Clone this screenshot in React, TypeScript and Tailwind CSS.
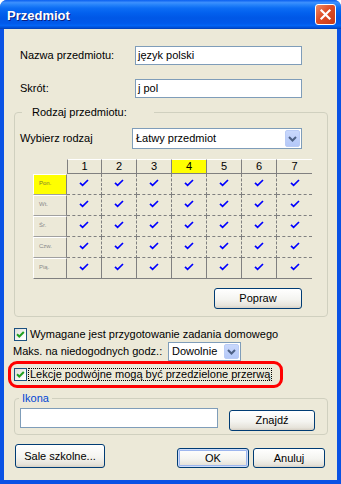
import clsx from "clsx";

const days = ["Pon.", "Wt.", "Śr.", "Czw.", "Pią."];
const hours = [1, 2, 3, 4, 5, 6, 7];

function CheckBox() {
  return (
    <div className="w-[13px] h-[13px] shrink-0 border border-[#1C5180] bg-[linear-gradient(135deg,#DCDCD7,#FFFFFF_80%)] flex items-center justify-center">
      <svg width="11" height="11" viewBox="0 0 11 11">
        <path d="M2 5.2 L4.3 7.5 L8.8 3" stroke="#21A121" strokeWidth="2" fill="none" />
      </svg>
    </div>
  );
}

function Select({ value, className }: { value: string; className: string }) {
  return (
    <div className={clsx("flex items-stretch border border-[#7F9DB9] bg-white p-[1px]", className)}>
      <span className="flex-1 flex items-center pl-[2px] whitespace-nowrap">{value}</span>
      <div className="w-[15px] rounded-[2px] border border-[#BACCF6] bg-[linear-gradient(to_bottom,#C9D8FC,#B4C8F8)] flex items-center justify-center">
        <svg width="9" height="6" viewBox="0 0 9 6">
          <path d="M1 1 L4.5 4.5 L8 1" stroke="#4D6185" strokeWidth="2" fill="none" />
        </svg>
      </div>
    </div>
  );
}

function Btn({ children, className }: { children: React.ReactNode; className: string }) {
  return (
    <div
      className={clsx(
        "flex items-center justify-center border border-[#003C74] rounded-[3px] bg-[linear-gradient(to_bottom,#FFFFFF,#F4F4F0_55%,#E6E3DA_88%,#D6D0C5)]",
        className
      )}
    >
      {children}
    </div>
  );
}

function TextBox({ value, className }: { value?: string; className: string }) {
  return (
    <div className={clsx("flex items-center border border-[#7F9DB9] bg-white pl-[2px]", className)}>
      {value}
    </div>
  );
}

function Check() {
  return (
    <svg width="10" height="8" viewBox="0 0 10 8">
      <path d="M1 3.8 L3.6 6.4 L9 1" stroke="#0000FF" strokeWidth="1.7" fill="none" />
    </svg>
  );
}

export default function App() {
  return (
    <div className="w-[341px] h-[484px] flex flex-col bg-[#0A52E4] rounded-t-[7px] overflow-hidden font-['Liberation_Sans',Arial,sans-serif] text-[11px] text-black">
      {/* title bar */}
      <div className="h-[29px] shrink-0 flex items-center pl-[7px] pt-[2px] bg-[linear-gradient(to_bottom,#0A5FF0_0%,#3D90FD_9%,#2784FA_16%,#0C6DF4_28%,#0260EE_45%,#0057E6_62%,#0059EB_80%,#0264F5_88%,#0050D8_95%,#003FB4_100%)]">
        <span className="text-white font-bold text-[13px] [text-shadow:1px_1px_0_#0A1E80]">Przedmiot</span>
        <div className="ml-auto mr-[5px] mb-[2px] w-[21px] h-[21px] rounded-[3px] border border-white bg-[linear-gradient(135deg,#EE8C68,#DE4D26_45%,#C73A18)] flex items-center justify-center">
          <svg width="13" height="13" viewBox="0 0 13 13">
            <path d="M2.5 2.5 L10.5 10.5 M10.5 2.5 L2.5 10.5" stroke="white" strokeWidth="2.2" strokeLinecap="square" />
          </svg>
        </div>
      </div>

      <div className="flex-1 mx-[4px] mb-[4px] bg-[#ECE9D8] flex flex-col">
        <div className="mt-[17px] flex items-center h-[19px]">
          <span className="w-[131px] pl-[16px]">Nazwa przedmiotu:</span>
          <TextBox value="język polski" className="w-[167px] h-[19px]" />
        </div>
        <div className="mt-[14px] flex items-center h-[19px]">
          <span className="w-[131px] pl-[16px]">Skrót:</span>
          <TextBox value="j pol" className="w-[167px] h-[19px]" />
        </div>

        <fieldset className="mt-[7px] ml-[10px] w-[314px] border border-[#D0D0BF] rounded-[4px]">
          <legend className="ml-[7px] w-[132px] pl-[10px] leading-[14px]">Rodzaj przedmiotu:</legend>
          <div className="mt-[9px] flex items-center h-[21px]">
            <span className="ml-[5px] w-[112px]">Wybierz rodzaj</span>
            <Select value="Łatwy przedmiot" className="w-[170px] h-[21px]" />
          </div>

          <div className="mt-[10px] ml-[18px] grid grid-cols-[34px_repeat(7,35px)] grid-rows-[15px_repeat(5,21px)]">
            <div />
            {hours.map((h, i) => (
              <div
                key={h}
                className={clsx(
                  "flex items-center justify-center border-t border-t-white border-b border-b-[#808080]",
                  i === 0 && "border-l border-l-[#808080]",
                  i < 6 && "border-r border-r-[#808080]",
                  h === 4 && "bg-[#FFFF00]"
                )}
              >
                {h}
              </div>
            ))}
            {days.map((d, r) => (
              <>
                <div
                  key={d}
                  className={clsx(
                    "border-t border-t-white border-l border-l-white border-b border-r border-r-[#808080] pl-[5px] pt-[4px] text-[6px] leading-[8px]",
                    r === 4 ? "border-b-[#808080]" : "border-b-[#A0A0A0]",
                    r === 0 ? "bg-[#FFFF00] text-[#7A7A30]" : "text-[#8A8A8A]"
                  )}
                >
                  {d}
                </div>
                {hours.map((h, i) => (
                  <div
                    key={d + h}
                    className={clsx(
                      "flex items-center justify-center pb-[3px] border-b border-b-[#808080]",
                      r === 4 ? "border-solid" : "border-dashed",
                      i < 6 && "border-r border-r-[#808080]"
                    )}
                  >
                    <Check />
                  </div>
                ))}
              </>
            ))}
          </div>

          <div className="mt-[9px] pb-[7px] pr-[25px] flex justify-end">
            <Btn className="w-[88px] h-[21px]">Popraw</Btn>
          </div>
        </fieldset>

        <div className="mt-[10px] ml-[10px] h-[14px] flex items-center gap-[3px]">
          <CheckBox />
          <span>Wymagane jest przygotowanie zadania domowego</span>
        </div>

        <div className="mt-[1px] ml-[9px] flex items-center h-[19px]">
          <span className="w-[155px]">Maks. na niedogodnych godz.:</span>
          <Select value="Dowolnie" className="w-[73px] h-[19px]" />
        </div>

        <div className="ml-[4px] w-[275px] h-[27px] border-[3px] border-[#FF0000] rounded-[9px] flex items-center pl-[3px] gap-[1px]">
          <CheckBox />
          <span className="border border-dotted border-black px-[1px] leading-[11px] whitespace-nowrap">
            Lekcje podwójne mogą być przedzielone przerwą
          </span>
        </div>

        <fieldset className="mt-[3px] ml-[10px] w-[314px] border border-[#D0D0BF] rounded-[4px]">
          <legend className="ml-[4px] px-[3px] leading-[14px] text-[#0046D5]">Ikona</legend>
          <div className="flex items-start pb-[3px]">
            <TextBox className="mt-[3px] ml-[5px] w-[198px] h-[20px]" />
            <Btn className="mt-[5px] ml-[11px] w-[86px] h-[21px]">Znajdź</Btn>
          </div>
        </fieldset>

        <div className="mt-[9px] flex items-end">
          <Btn className="ml-[11px] w-[90px] h-[24px]">Sale szkolne...</Btn>
          <Btn className="ml-[72px] w-[72px] h-[20px] shadow-[inset_0_0_0_1px_#CEDCF8,inset_0_0_0_2px_#9DB6EE]">OK</Btn>
          <Btn className="ml-[4px] w-[72px] h-[20px]">Anuluj</Btn>
        </div>
      </div>
    </div>
  );
}
